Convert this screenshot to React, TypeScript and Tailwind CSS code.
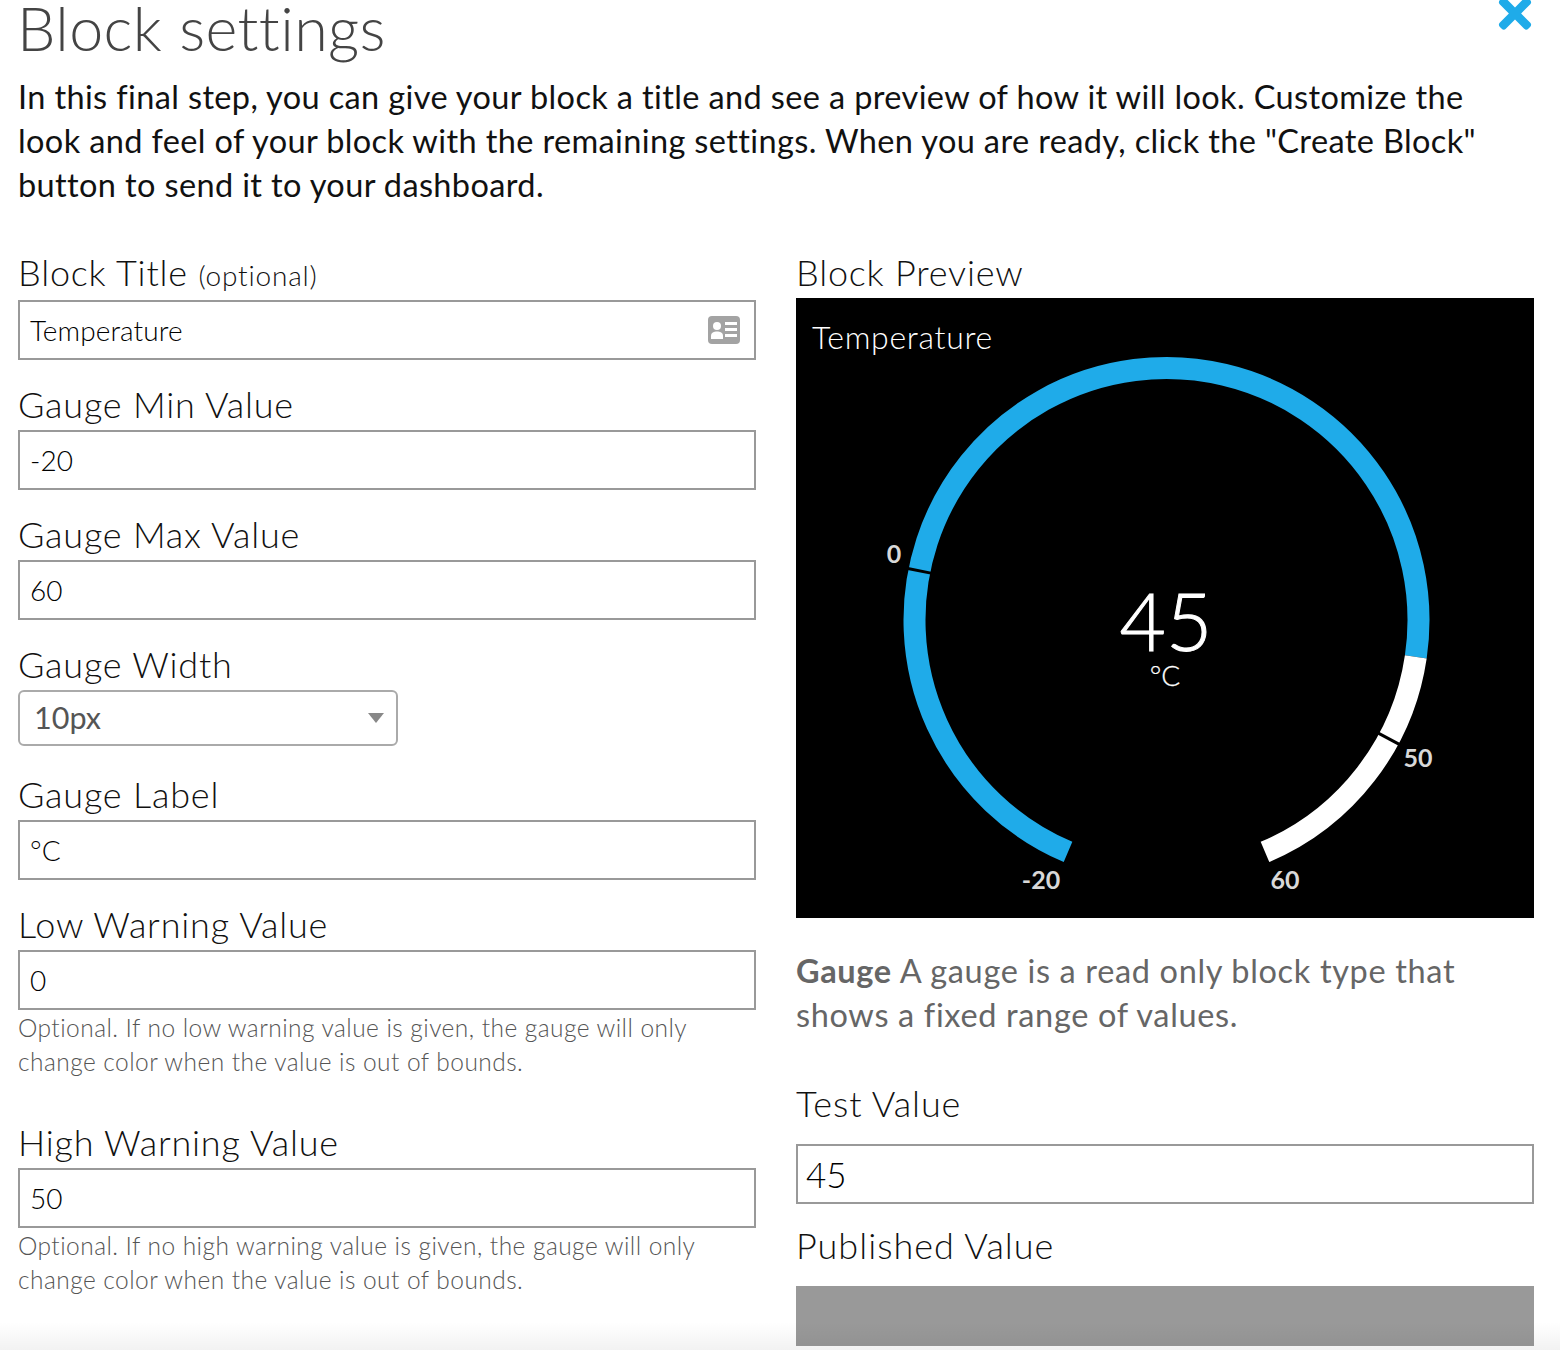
import { ReactNode } from 'react';
import { FaTimes } from 'react-icons/fa';

const CX = 370.5;
const CY = 322;
const R = 252;

// degrees clockwise from straight up
function polar(deg: number, r: number = R) {
  const a = (deg * Math.PI) / 180;
  return [CX + r * Math.sin(a), CY - r * Math.cos(a)];
}

function arc(from: number, to: number) {
  const [x1, y1] = polar(from);
  const [x2, y2] = polar(to);
  const large = to - from > 180 ? 1 : 0;
  return `M ${x1} ${y1} A ${R} ${R} 0 ${large} 1 ${x2} ${y2}`;
}

function Tick({ deg }: { deg: number }) {
  const [x1, y1] = polar(deg, R - 13);
  const [x2, y2] = polar(deg, R + 13);
  return <line x1={x1} y1={y1} x2={x2} y2={y2} stroke="#000" strokeWidth={3} />;
}

function Gauge() {
  return (
    <svg viewBox="0 0 738 620" className="absolute inset-0 w-full h-full">
      <path d={arc(-157, 98.4)} fill="none" stroke="#1fabe9" strokeWidth={22} />
      <path d={arc(98.4, 157)} fill="none" stroke="#fff" strokeWidth={22} />
      <Tick deg={-78.75} />
      <Tick deg={118.1} />
      <g fill="#d8d8d8" fontSize={25} fontWeight={700} textAnchor="middle" fontFamily="Lato, sans-serif">
        <text x={98} y={265}>0</text>
        <text x={622} y={469}>50</text>
        <text x={245} y={591}>-20</text>
        <text x={489} y={591}>60</text>
      </g>
      <g fill="#fff" stroke="#fff" textAnchor="middle" fontFamily="Lato, sans-serif">
        <text x={370} y={353} fontSize={80} fontWeight={300} strokeWidth={1}>45</text>
        <text x={369} y={388} fontSize={28} fontWeight={300} strokeWidth={0.3}>°C</text>
      </g>
    </svg>
  );
}

function CardIcon() {
  return (
    <svg viewBox="0 0 32 28" className="w-8 h-7">
      <rect x="0" y="0" width="32" height="28" rx="4" fill="#a3a3a3" />
      <circle cx="9" cy="10" r="4" fill="#fff" />
      <path d="M3 23 V20 C3 16.5 6 15.5 9 15.5 C12 15.5 15 16.5 15 20 V23 Z" fill="#fff" />
      <rect x="17" y="6" width="12" height="3" fill="#fff" />
      <rect x="17" y="12" width="12" height="3" fill="#fff" />
      <rect x="17" y="18" width="12" height="3" fill="#fff" />
    </svg>
  );
}

function Label({ children }: { children: ReactNode }) {
  return <label className="block mt-[22px] mb-[4px] h-[44px] text-[36px] leading-[44px] tracking-[0.8px] font-light text-[#111]">{children}</label>;
}

function TextBox({ value, icon }: { value: string; icon?: ReactNode }) {
  return (
    <div className="flex items-center justify-between h-[60px] border-2 border-[#999] pl-[10px] pr-[14px] text-[28px] text-[#000] font-light tracking-[0.1px]">
      <span>{value}</span>
      {icon}
    </div>
  );
}

function Help({ children }: { children: ReactNode }) {
  return <p className="pt-[1px] pb-[1px] text-[24.5px] leading-[34px] tracking-[0.45px] text-[#555] font-light">{children}</p>;
}

export default function App() {
  return (
    <div className="relative w-[1560px] h-[1350px] overflow-hidden bg-white font-['Lato',sans-serif]">
      <FaTimes className="absolute right-[25px] top-[-10px] w-[40px] h-[47px] text-[#1fabe9]" />

      <div className="pl-[18px] pr-[26px]">
        <h1 className="h-[75px] -ml-[1px] text-[61px] leading-[56px] tracking-[0.4px] font-light text-[#444]">Block settings</h1>
        <p className="h-[155px] text-[32.5px] leading-[44px] tracking-[0.37px] text-[#111] w-[1500px]">
          In this final step, you can give your block a title and see a preview of how it will look. Customize the look and feel of your block with the remaining settings. When you are ready, click the "Create Block" button to send it to your dashboard.
        </p>

        <div className="grid grid-cols-2 gap-x-[40px]">
          <div>
            <label className="block mt-[20px] mb-[6px] h-[44px] text-[36px] leading-[44px] tracking-[0.8px] font-light text-[#111]">Block Title <span className="text-[28px]">(optional)</span></label>
            <TextBox value="Temperature" icon={<CardIcon />} />
            <Label>Gauge Min Value</Label>
            <TextBox value="-20" />
            <Label>Gauge Max Value</Label>
            <TextBox value="60" />
            <Label>Gauge Width</Label>
            <div className="flex items-center justify-between w-[380px] h-[56px] border-2 border-[#aaa] rounded-[6px] pl-[14px] pr-[12px] text-[30.5px] text-[#555]">
              <span>10px</span>
              <span className="w-0 h-0 border-x-[8px] border-x-transparent border-t-[10px] border-t-[#888]" />
            </div>
            <div className="h-[4px]" />
            <Label>Gauge Label</Label>
            <TextBox value="°C" />
            <Label>Low Warning Value</Label>
            <TextBox value="0" />
            <Help>Optional. If no low warning value is given, the gauge will only change color when the value is out of bounds.</Help>
            <div className="h-[18px]" />
            <Label>High Warning Value</Label>
            <TextBox value="50" />
            <Help>Optional. If no high warning value is given, the gauge will only change color when the value is out of bounds.</Help>
          </div>

          <div>
            <label className="block mt-[20px] mb-[4px] h-[44px] text-[36px] leading-[44px] tracking-[0.8px] font-light text-[#111]">Block Preview</label>
            <div className="relative h-[620px] bg-black">
              <div className="absolute left-[16px] top-[19px] text-[32px] leading-[40px] tracking-[0.7px] text-white font-light">Temperature</div>
              <Gauge />
            </div>
            <p className="mt-[31px] text-[32.5px] leading-[44px] tracking-[0.65px] text-[#666]">
              <strong className="font-bold">Gauge</strong> A gauge is a read only block type that shows a fixed range of values.
            </p>
            <label className="block mt-[44px] mb-[19px] h-[44px] text-[36px] leading-[44px] tracking-[0.9px] font-light text-[#111]">Test Value</label>
            <div className="flex items-center h-[60px] border-2 border-[#999] pl-[8px] text-[35px] text-[#000] font-light">45</div>
            <label className="block mt-[19px] mb-[19px] h-[44px] text-[36px] leading-[44px] tracking-[1px] font-light text-[#111]">Published Value</label>
            <div className="h-[60px] bg-[#999]" />
          </div>
        </div>
      </div>

      <div className="absolute left-0 right-0 bottom-0 h-[28px] bg-gradient-to-b from-transparent to-black/5" />
    </div>
  );
}
